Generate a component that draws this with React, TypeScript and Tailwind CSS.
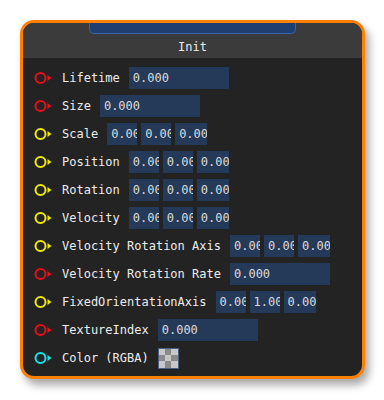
import React from 'react'

type Pin = 'red' | 'yellow' | 'cyan'

const PIN_COLORS: Record<Pin, string> = {
  red: '#e8101c',
  yellow: '#f0ec00',
  cyan: '#18e4ec',
}

interface Row {
  label: string
  pin: Pin
  values?: string[]
  wide?: string
  color?: boolean
}

const ROWS: Row[] = [
  { label: 'Lifetime', pin: 'red', wide: '0.000' },
  { label: 'Size', pin: 'red', wide: '0.000' },
  { label: 'Scale', pin: 'yellow', values: ['0.000', '0.000', '0.00'] },
  { label: 'Position', pin: 'yellow', values: ['0.000', '0.000', '0.00'] },
  { label: 'Rotation', pin: 'yellow', values: ['0.000', '0.000', '0.00'] },
  { label: 'Velocity', pin: 'yellow', values: ['0.000', '0.000', '0.00'] },
  { label: 'Velocity Rotation Axis', pin: 'yellow', values: ['0.000', '0.000', '0.00'] },
  { label: 'Velocity Rotation Rate', pin: 'red', wide: '0.000' },
  { label: 'FixedOrientationAxis', pin: 'yellow', values: ['0.000', '1.000', '0.00'] },
  { label: 'TextureIndex', pin: 'red', wide: '0.000' },
  { label: 'Color (RGBA)', pin: 'cyan', color: true },
]

function PinIcon({ pin }: { pin: Pin }) {
  const c = PIN_COLORS[pin]
  return (
    <svg width="18" height="14" viewBox="0 0 18 14" className="shrink-0">
      <circle cx="6.5" cy="7" r="5" fill="none" stroke={c} strokeWidth="2" />
      <path d="M13.5 4 L17.5 7 L13.5 10 Z" fill={c} />
    </svg>
  )
}

function Field({ text, w }: { text: string; w: string }) {
  return (
    <div className={`h-[22px] ${w} bg-[#253a58] px-1 flex items-center overflow-hidden whitespace-nowrap text-[#dadada]`}>
      {text}
    </div>
  )
}

function Swatch() {
  const cells = [0, 1, 0, 1, 0, 1, 0, 1, 0]
  return (
    <div className="w-[21px] h-[21px] border border-[#4a5f80] grid grid-cols-3 grid-rows-3">
      {cells.map((c, i) => (
        <div key={i} className={c ? 'bg-[#8a8a8a]' : 'bg-[#c8c8c8]'} />
      ))}
    </div>
  )
}

export default function App() {
  return (
    <div className="min-h-[400px] bg-white p-5" style={{ fontFamily: '"DejaVu Sans Mono", monospace' }}>
      <div className="w-[345px] h-[359px] rounded-[14px] border-[3px] border-[#ff8000] bg-[#232323] overflow-hidden shadow-[4px_6px_8px_rgba(0,0,0,0.35)] flex flex-col">
        <div className="h-[35px] bg-[#3b3b3b] flex flex-col shrink-0">
          <div className="mx-auto w-[207px] h-[11px] bg-[#203e70] border border-t-0 border-[#3c64a8] rounded-b-[5px]" />
          <div className="flex-1 flex items-center justify-center pt-[2px] text-[12px] text-[#ececec]">Init</div>
        </div>
        <div className="flex flex-col gap-[6px] pt-[9px] pl-[11px] text-[12px] text-[#ececec]">
          {ROWS.map((r) => (
            <div key={r.label} className="h-[22px] flex items-center">
              <PinIcon pin={r.pin} />
              <span className="ml-[10px] mr-[9px] whitespace-pre">{r.label}</span>
              {r.wide && <Field text={r.wide} w="w-[100px]" />}
              {r.values && (
                <div className="flex gap-1">
                  <Field text={r.values[0]} w="w-[30px]" />
                  <Field text={r.values[1]} w="w-[30px]" />
                  <Field text={r.values[2]} w="w-[32px]" />
                </div>
              )}
              {r.color && <Swatch />}
            </div>
          ))}
        </div>
      </div>
    </div>
  )
}
